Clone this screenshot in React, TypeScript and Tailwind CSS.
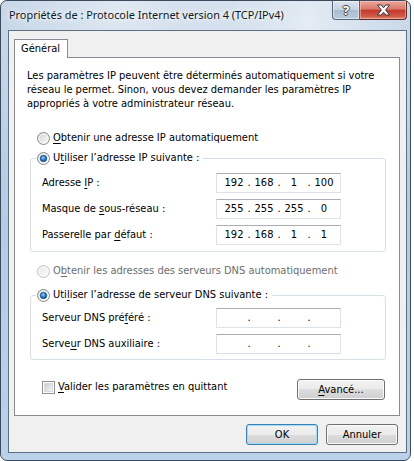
import { Fragment, ReactNode } from "react";

function U({ children }: { children: ReactNode }) {
  return <span className="underline underline-offset-[2px] decoration-[1px]">{children}</span>;
}

function Radio({ checked, disabled }: { checked?: boolean; disabled?: boolean }) {
  const id = checked ? "rc" : disabled ? "rd" : "rn";
  return (
    <svg width="13" height="13" viewBox="0 0 13 13" className="shrink-0">
      <defs>
        <linearGradient id={id + "f"} x1="0" y1="0" x2="1" y2="1">
          <stop offset="0" stopColor={disabled ? "#e6e6e6" : "#cfd2d6"} />
          <stop offset="1" stopColor="#fbfbfb" />
        </linearGradient>
        <radialGradient id={id + "d"} cx="0.45" cy="0.4" r="0.6">
          <stop offset="0" stopColor="#9ad3fb" />
          <stop offset="0.55" stopColor="#2a7bc8" />
          <stop offset="1" stopColor="#0e3e78" />
        </radialGradient>
      </defs>
      <circle cx="6.5" cy="6.5" r="6" fill={`url(#${id}f)`} stroke={disabled ? "#c3c3c3" : "#8a8b8c"} strokeWidth="1" />
      <circle cx="6.5" cy="6.5" r="4.5" fill="none" stroke="#ffffff" strokeOpacity="0.7" strokeWidth="1" />
      {checked && <circle cx="6.5" cy="6.5" r="3.3" fill={`url(#${id}d)`} stroke="#1c4f8c" strokeWidth="0.6" />}
    </svg>
  );
}

function Check() {
  return (
    <div className="w-[13px] h-[13px] shrink-0 border border-[#8e8f8f] bg-white p-[1px]">
      <div className="w-full h-full border border-[#d8dadd] bg-gradient-to-br from-[#c9cdd2] to-[#f4f4f4]" />
    </div>
  );
}

function IpBox({ parts }: { parts: string[] }) {
  return (
    <div className="w-[125px] h-[20px] shrink-0 border border-[#dde2e8] border-t-[#abadb3] bg-white flex items-center pl-[5px] leading-[16px]">
      {parts.map((p, i) => (
        <Fragment key={i}>
          {i > 0 && <span className="w-[6px] text-center">.</span>}
          <span className="w-[24px] text-center">{p}</span>
        </Fragment>
      ))}
    </div>
  );
}

function Btn({ children, def, w }: { children: ReactNode; def?: boolean; w: string }) {
  return (
    <div
      className={`${w} h-[21px] rounded-[3px] border ${
        def
          ? "border-[#3c7fb1] shadow-[inset_0_0_0_1px_#9fdcf7]"
          : "border-[#707070] shadow-[inset_0_0_0_1px_#fbfbfb]"
      } bg-[linear-gradient(to_bottom,#f2f2f2_0%,#ebebeb_50%,#dddddd_50%,#cfcfcf_100%)] flex items-center justify-center leading-[16px]`}
    >
      {children}
    </div>
  );
}

function Row({ label, parts }: { label: ReactNode; parts: string[] }) {
  return (
    <div className="flex items-center h-[20px]">
      <div className="w-[180px] pl-[6px] whitespace-nowrap">{label}</div>
      <IpBox parts={parts} />
    </div>
  );
}

export default function App() {
  return (
    <div className="w-[414px] h-[461px] bg-white font-['DejaVu_Sans_Condensed','DejaVu_Sans',sans-serif] text-[11px] text-black">
      <div className="w-[411px] h-[461px] rounded-[7px] border border-[#3b4b5d] bg-[radial-gradient(ellipse_at_30%_0%,#dfe8f2_0%,transparent_45%),radial-gradient(ellipse_at_75%_5%,#e4ecf4_0%,transparent_35%),linear-gradient(to_bottom,#bdcfe3,#b3cae3_30%,#bbd1e9)] flex flex-col">
        {/* title bar */}
        <div className="h-[29px] flex items-start">
          <div className="pl-[8px] pt-[6px] leading-[16px] whitespace-nowrap font-['Noto_Sans',sans-serif] text-[10.9px] text-[#101820] [text-shadow:0_0_8px_#ffffff,0_0_4px_#ffffff]">
            Propriétés de : Protocole Internet version 4 (TCP/IPv4)
          </div>
          <div className="ml-auto mr-[3px] flex">
            <div className="w-[28px] h-[19px] rounded-bl-[4px] border border-t-0 border-[#54657a] bg-[linear-gradient(to_bottom,#dbe4ee_0%,#c4d2e1_48%,#a9bbcf_52%,#bccbdb_100%)] shadow-[inset_0_0_0_1px_rgba(255,255,255,0.5)] flex items-center justify-center">
              <span className="font-['Noto_Sans',sans-serif] font-bold text-[13px] leading-[14px] text-white [text-shadow:1px_0_0_#4a4a4a,-1px_0_0_#4a4a4a,0_1px_0_#4a4a4a,0_-1px_0_#4a4a4a]">?</span>
            </div>
            <div className="w-[47px] h-[19px] rounded-br-[4px] border border-t-0 border-l-0 border-[#5a2a24] bg-[linear-gradient(to_bottom,#e9a99c_0%,#d9776a_45%,#c33a2d_52%,#cf5a48_85%,#e58a73_100%)] shadow-[inset_0_0_0_1px_rgba(255,220,210,0.45)] flex items-center justify-center">
              <svg width="15" height="12" viewBox="0 0 15 12">
                <path
                  d="M1.5 1 H5.2 L7.5 3.8 L9.8 1 H13.5 L9.6 6 L13.5 11 H9.8 L7.5 8.2 L5.2 11 H1.5 L5.4 6 Z"
                  fill="#ffffff"
                  stroke="#3a3a3a"
                  strokeWidth="1"
                  strokeLinejoin="round"
                />
              </svg>
            </div>
          </div>
        </div>

        {/* client area */}
        <div className="ml-[7px] w-[399px] h-[423px] border border-[#5f6f82] bg-[#f0f0f0] flex flex-col">
          <div className="ml-[5px] mt-[8px] w-[54px] h-[19px] mb-[-1px] relative z-10 border border-b-0 border-[#898c95] bg-white flex items-center pl-[6px] leading-[16px]">
            Général
          </div>
          <div className="ml-[5px] w-[386px] h-[359px] border border-[#898c95] bg-white flex flex-col">
            <p className="mt-[11px] pl-[12px] leading-[14px] whitespace-nowrap">
              Les paramètres IP peuvent être déterminés automatiquement si votre
              <br />
              réseau le permet. Sinon, vous devez demander les paramètres IP
              <br />
              appropriés à votre administrateur réseau.
            </p>

            <div className="mt-[19px] ml-[22px] h-[16px] flex items-center gap-[3px] leading-[16px]">
              <Radio />
              <span>
                <U>O</U>btenir une adresse IP automatiquement
              </span>
            </div>

            <fieldset className="mt-[4px] ml-[15px] w-[356px] border border-[#d5dfe5] rounded-[3px] px-[5px] pb-[6px]">
              <legend className="pl-[1px] pr-[4px] h-[16px] flex items-center gap-[3px] leading-[16px]">
                <Radio checked />
                <span>
                  U<U>t</U>iliser l’adresse IP suivante :
                </span>
              </legend>
              <div className="mt-[7px] flex flex-col gap-[6px]">
                <Row label={<>Adresse <U>I</U>P :</>} parts={["192", "168", "1", "100"]} />
                <Row label={<>Masque de <U>s</U>ous-réseau :</>} parts={["255", "255", "255", "0"]} />
                <Row label={<>Passerelle par <U>d</U>éfaut :</>} parts={["192", "168", "1", "1"]} />
              </div>
            </fieldset>

            <div className="mt-[11px] ml-[22px] h-[16px] flex items-center gap-[3px] leading-[16px] text-[#6d6d6d]">
              <Radio disabled />
              <span>
                O<U>b</U>tenir les adresses des serveurs DNS automatiquement
              </span>
            </div>

            <fieldset className="mt-[8px] ml-[15px] w-[356px] border border-[#d5dfe5] rounded-[3px] px-[5px] pb-[5px]">
              <legend className="pl-[1px] pr-[4px] h-[16px] flex items-center gap-[3px] leading-[16px]">
                <Radio checked />
                <span>
                  Uti<U>l</U>iser l’adresse de serveur DNS suivante :
                </span>
              </legend>
              <div className="mt-[5px] flex flex-col gap-[6px]">
                <Row label={<>Serveur DNS pré<U>f</U>éré :</>} parts={["", "", "", ""]} />
                <Row label={<>Serve<U>u</U>r DNS auxiliaire :</>} parts={["", "", "", ""]} />
              </div>
            </fieldset>

            <div className="mt-[19px] flex items-start justify-between">
              <div className="ml-[27px] mt-[1px] h-[14px] flex items-center gap-[3px] leading-[16px]">
                <Check />
                <span>
                  <U>V</U>alider les paramètres en quittant
                </span>
              </div>
              <div className="mr-[14px]">
                <Btn w="w-[88px]">
                  <span>
                    <U>A</U>vancé...
                  </span>
                </Btn>
              </div>
            </div>
          </div>

          <div className="mt-[8px] pr-[8px] flex justify-end gap-[8px]">
            <Btn w="w-[72px]" def>
              OK
            </Btn>
            <Btn w="w-[72px]">Annuler</Btn>
          </div>
        </div>
      </div>
    </div>
  );
}
